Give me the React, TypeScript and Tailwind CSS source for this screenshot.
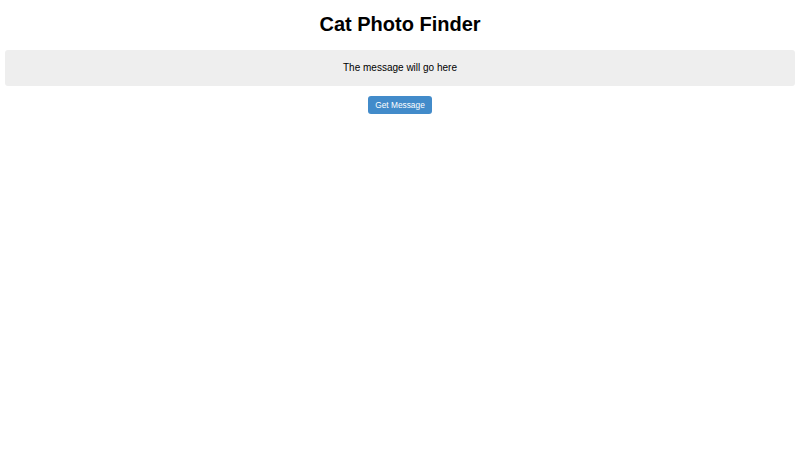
export default function App() {
  return (
    <div className="min-h-[450px] bg-white px-[5px] text-black [font-family:'Liberation_Sans',Arial,sans-serif]">
      <h1 className="py-[13.4px] text-center text-[20px] font-bold leading-[23px]">
        Cat Photo Finder
      </h1>
      <div className="rounded-[3px] bg-[#eeeeee] py-[12.5px] text-center text-[10px] leading-[11.5px]">
        The message will go here
      </div>
      <div className="mt-[10px] flex justify-center">
        <button className="h-[18px] w-[64px] rounded-[3px] bg-[#428bca] text-[8.33px] leading-[10px] text-white">
          Get Message
        </button>
      </div>
    </div>
  );
}
